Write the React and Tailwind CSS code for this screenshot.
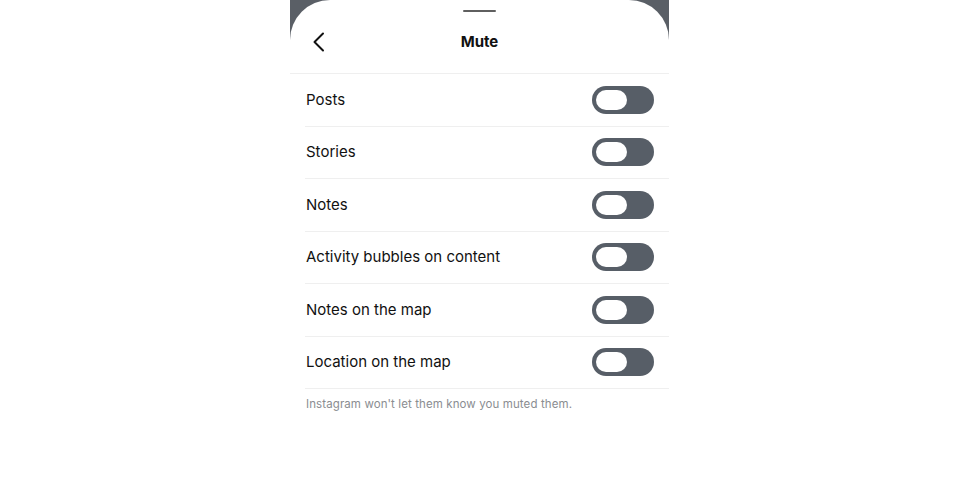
import React, { useState } from 'react';

const rows = ['Posts', 'Stories', 'Notes', 'Activity bubbles on content', 'Notes on the map', 'Location on the map'];

function Toggle({ on, onClick }) {
  return (
    <button
      onClick={onClick}
      className={`w-[62px] h-[28px] rounded-full p-[4px] flex items-center ${on ? 'bg-[#0095f6] justify-end' : 'bg-[#575e67] justify-start'}`}
    >
      <span className="block w-[31px] h-[20px] rounded-full bg-white" />
    </button>
  );
}

export default function App() {
  const [muted, setMuted] = useState(rows.map(() => false));

  const flip = (i) => setMuted(muted.map((v, j) => (j === i ? !v : v)));

  return (
    <div className="w-[960px] h-[480px] bg-white flex justify-center" style={{ fontFamily: 'Inter, "Noto Sans", sans-serif' }}>
      <div className="w-[379px] h-full bg-[#5a5f66] ml-[-1px]">
        <div className="h-full bg-white rounded-t-[40px] flex flex-col">
          <div className="h-[74px] border-b border-[#efefef] flex flex-col items-center relative">
            <div className="mt-[10px] w-[33px] h-[2px] rounded-full bg-[#5f5f5f]" />
            <svg className="absolute left-[22px] top-[32px]" width="14" height="20" viewBox="0 0 14 20" fill="none">
              <path d="M11 1.5 L2.5 10 L11 18.5" stroke="#111" strokeWidth="2" strokeLinecap="round" strokeLinejoin="round" />
            </svg>
            <div className="mt-[22px] text-[15px] font-bold text-[#111] leading-none">Mute</div>
          </div>
          <div className="pl-[15px]">
            {rows.map((label, i) => (
              <div key={label} className="h-[52.5px] border-b border-[#efefef] flex items-center justify-between pr-[15px]">
                <span className="text-[15px] text-[#111] pl-[1px]">{label}</span>
                <Toggle on={muted[i]} onClick={() => flip(i)} />
              </div>
            ))}
            <p className="pt-[7px] pl-[1px] text-[11.5px] tracking-[0.1px] text-[#8a8d91]">Instagram won't let them know you muted them.</p>
          </div>
        </div>
      </div>
    </div>
  );
}
